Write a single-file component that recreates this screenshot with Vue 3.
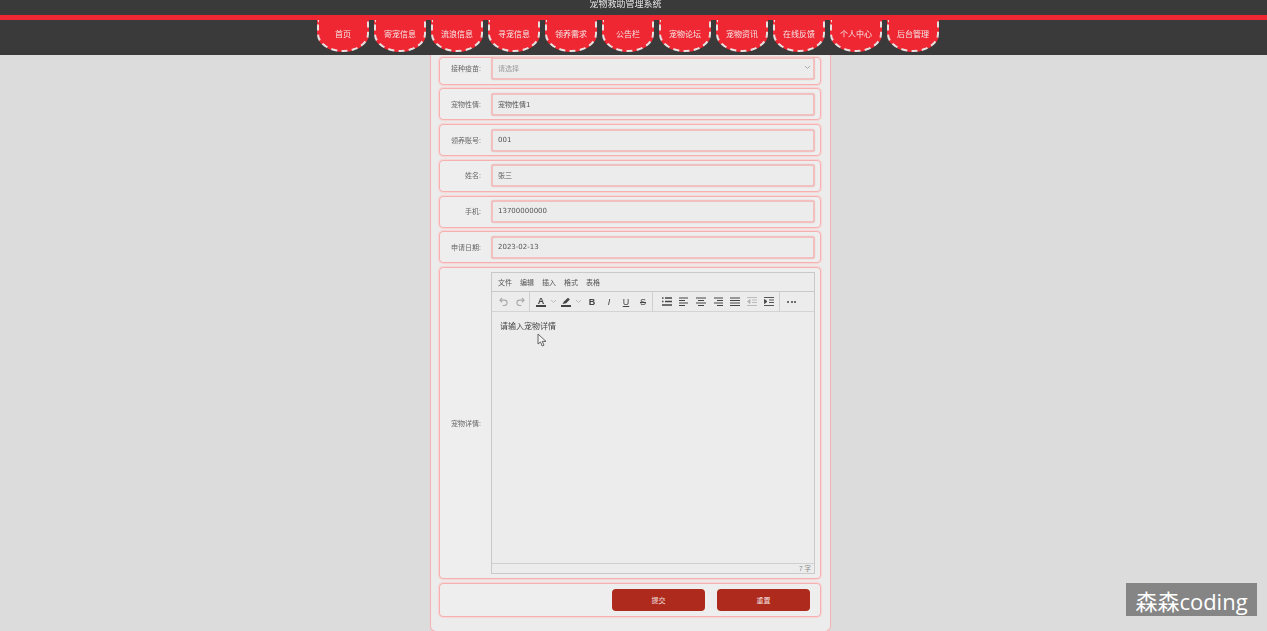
<script setup>
const navs = ['首页','寄宠信息','流浪信息','寻宠信息','领养需求','公告栏','宠物论坛','宠物资讯','在线反馈','个人中心','后台管理']
const fields = [
  { label: '接种疫苗:', value: '请选择', select: true },
  { label: '宠物性情:', value: '宠物性情1' },
  { label: '领养账号:', value: '001' },
  { label: '姓名:', value: '张三' },
  { label: '手机:', value: '13700000000' },
  { label: '申请日期:', value: '2023-02-13' },
]
const menus = ['文件','编辑','插入','格式','表格']
</script>

<template>
  <div class="page">
    <header class="top">
      <div class="title">宠物救助管理系统</div>
      <div class="band"></div>
      <nav class="nav">
        <a v-for="n in navs" :key="n" class="tab">{{ n }}</a>
      </nav>
    </header>
    <main class="main">
      <section class="card">
        <div v-for="(f, i) in fields" :key="f.label" class="row" :class="{ first: i === 0 }">
          <label class="label">{{ f.label }}</label>
          <div class="input" :class="{ muted: f.select }">
            <span>{{ f.value }}</span>
            <svg v-if="f.select" class="chev" width="7" height="5" viewBox="0 0 7 5"><path d="M1 1l2.500 2.500L6 1" fill="none" stroke="#aaa" stroke-width="1"/></svg>
          </div>
        </div>
        <div class="row editor-row">
          <label class="label">宠物详情:</label>
          <div class="editor">
            <div class="menubar"><span v-for="m in menus" :key="m">{{ m }}</span></div>
            <div class="toolbar">
              <div class="group g1">
                <span class="slot"><svg width="9" height="9" viewBox="0 0 10 10"><path d="M3.500 1L1 3.500 3.500 6M1 3.500h5a3 3 0 0 1 0 6H4" fill="none" stroke="#a8a8a8" stroke-width="1.200"/></svg></span>
                <span class="slot"><svg width="9" height="9" viewBox="0 0 10 10"><path d="M6.500 1L9 3.500 6.500 6M9 3.500H4a3 3 0 0 0 0 6h2" fill="none" stroke="#a8a8a8" stroke-width="1.200"/></svg></span>
              </div>
              <div class="group g2">
                <span class="cbtn">
                  <span class="color"><b class="a">A</b><i></i></span>
                  <svg width="7" height="5" viewBox="0 0 7 5"><path d="M1 1l2.500 2.500L6 1" fill="none" stroke="#bbb"/></svg>
                </span>
                <span class="cbtn second">
                  <span class="color"><svg width="10" height="8" viewBox="0 0 10 8"><path d="M1.500 7L3 4.500 7 .8l1.800 1.700-3.600 3.800z" fill="#444"/></svg><i></i></span>
                  <svg width="7" height="5" viewBox="0 0 7 5"><path d="M1 1l2.500 2.500L6 1" fill="none" stroke="#bbb"/></svg>
                </span>
                <b class="slot fmt bold">B</b>
                <em class="slot fmt ital">I</em>
                <span class="slot fmt und">U</span>
                <span class="slot fmt str">S</span>
              </div>
              <div class="group g3">
                <span class="slot"><svg width="10" height="9" viewBox="0 0 10 9"><path d="M3 1h7M3 4.500h7M0 8h10M0 1h1.500M0 4.500h1.500" stroke="#444" stroke-width="1.300"/></svg></span>
                <span class="slot"><svg width="10" height="9" viewBox="0 0 10 9"><path d="M0 1h9M0 3.500h6M0 6h9M0 8.500h6" stroke="#444"/></svg></span>
                <span class="slot"><svg width="10" height="9" viewBox="0 0 10 9"><path d="M0 1h10M2 3.500h6M0 6h10M2 8.500h6" stroke="#444"/></svg></span>
                <span class="slot"><svg width="10" height="9" viewBox="0 0 10 9"><path d="M1 1h9M4 3.500h6M1 6h9M4 8.500h6" stroke="#444"/></svg></span>
                <span class="slot"><svg width="10" height="9" viewBox="0 0 10 9"><path d="M0 1h10M0 3.500h10M0 6h10M0 8.500h10" stroke="#444"/></svg></span>
                <span class="slot"><svg width="10" height="9" viewBox="0 0 10 9"><path d="M0 .5h10M5 3h5M5 5.500h5M0 8.500h10M3 2.500L.5 4.500 3 6.500z" stroke="#b5b5b5" fill="#b5b5b5" stroke-width=".9"/></svg></span>
                <span class="slot"><svg width="10" height="9" viewBox="0 0 10 9"><path d="M0 .5h10M5 3h5M5 5.500h5M0 8.500h10M.5 2.500L3 4.500.5 6.500z" stroke="#444" fill="#444" stroke-width=".9"/></svg></span>
              </div>
              <div class="group g4"><i></i><i></i><i></i></div>
            </div>
            <div class="body">
              <span>请输入宠物详情</span>
              <svg class="cursor" width="10" height="14" viewBox="0 0 10 14"><path d="M1 1v10l2.500-2 1.700 4 1.800-.8-1.700-3.800H9z" fill="#f2f2f2" stroke="#555" stroke-width=".9"/></svg>
            </div>
            <div class="status">7 字</div>
          </div>
        </div>
        <div class="row actions">
          <button class="btn" type="button">提交</button>
          <button class="btn" type="button">重置</button>
        </div>
      </section>
    </main>
    <div class="mark">森森coding</div>
  </div>
</template>

<style>
html, body { margin: 0; padding: 0; height: 100%; overflow: hidden; background: #dbdbdb; }
</style>

<style scoped>
.page {
  position: relative;
  width: 1267px;
  height: 631px;
  overflow: hidden;
  display: flex;
  flex-direction: column;
  background: #dcdcdc;
  font-family: "Liberation Sans", "Noto Sans CJK SC", sans-serif;
  color: #555;
}
.top { background: #3a3a3a; flex: none; height: 55px; }
.title {
  height: 15px;
  line-height: 8px;
  text-align: center;
  font-size: 9px;
  color: #e8e8e8;
  padding-right: 16px;
  filter: blur(.3px);
}
.band { height: 5px; background: #ee2733; }
.nav { display: flex; justify-content: center; gap: 5px; padding-right: 11px; }
.tab {
  width: 48px;
  height: 30px;
  background: #ee2733;
  border: 2px dashed #eadfdf;
  border-top: 0;
  border-radius: 0 0 26px 26px / 0 0 18px 18px;
  color: #f5e8e8;
  font-size: 8px;
  line-height: 29px;
  text-align: center;
  filter: blur(.35px);
}
.main { flex: 1; min-height: 0; display: flex; justify-content: center; align-items: flex-start; overflow: hidden; padding-right: 6px; }
.card {
  width: 382px;
  height: 574px;
  box-sizing: content-box;
  background: #ececec;
  border: 1px solid #f3b3b3;
  border-top: 0;
  border-radius: 0 0 6px 6px;
  padding: 1.500px 9px 0 8px;
  display: flex;
  flex-direction: column;
  gap: 3.800px;
  box-shadow: 0 0 1px #f7c4c4;
}
.row {
  display: flex;
  align-items: center;
  height: 32px;
  flex: none;
  box-sizing: border-box;
  border: 1px solid #f6b0b0;
  border-radius: 4px;
  box-shadow: 0 0 1px 1px #f8d4d4;
  background: #eeeeee;
  padding-right: 5px;
}
.first { height: 28px; padding-bottom: 5px; }
.label {
  width: 41px;
  flex: none;
  text-align: right;
  font-size: 7px;
  color: #666;
  margin-right: 10px;
  padding-bottom: 1px;
  filter: blur(.25px);
}
.input {
  flex: 1;
  height: 23px;
  box-sizing: border-box;
  border: 2px solid #f3c0c0;
  border-radius: 3px;
  background: #ececec;
  display: flex;
  align-items: center;
  justify-content: space-between;
  padding: 0 2px 1px 5px;
  font-family: "DejaVu Sans", "Noto Sans CJK SC", sans-serif;
  font-size: 7px;
  color: #555;
  box-shadow: 0 0 1px #d8b0b0;
}
.input span { filter: blur(.25px); }
.muted { color: #999; }
.editor-row { height: 312px; }
.editor {
  flex: 1;
  height: 302px;
  box-sizing: border-box;
  border: 1px solid #c9c9c9;
  display: flex;
  flex-direction: column;
  background: #ececec;
}
.menubar {
  height: 19px;
  flex: none;
  display: flex;
  align-items: center;
  gap: 8px;
  padding: 0 0 1px 6px;
  font-size: 7px;
  color: #555;
  border-bottom: 1px solid #c9c9c9;
  box-sizing: border-box;
}
.menubar span { filter: blur(.25px); }
.toolbar {
  height: 20px;
  flex: none;
  display: flex;
  border-bottom: 1px solid #d4d4d4;
  box-sizing: border-box;
}
.group {
  display: flex;
  align-items: center;
  height: 100%;
  flex: none;
  border-right: 1px solid #cfcfcf;
  box-sizing: border-box;
}
.slot {
  width: 17px;
  flex: none;
  display: flex;
  align-items: center;
  justify-content: center;
}
.g1 { width: 38px; padding-left: 2.500px; }
.g2 { width: 123px; padding-left: 6px; }
.g3 { width: 127px; padding-left: 5px; }
.g4 { border-right: 0; padding-left: 7px; gap: 1.500px; }
.g4 i { width: 2px; height: 2px; border-radius: 50%; background: #444; }
.cbtn { width: 24px; flex: none; display: flex; align-items: center; gap: 4px; }
.second { margin-left: 1px; margin-right: -1.500px; }
.color { display: flex; flex-direction: column; align-items: center; width: 10px; flex: none; line-height: 8px; }
.color i { display: block; width: 10px; height: 1.500px; background: #444; }
.a { font-size: 9px; line-height: 8px; color: #444; font-weight: 700; filter: blur(.2px); }
.fmt { font-size: 9px; line-height: 10px; color: #444; font-weight: 400; filter: blur(.2px); }
.bold { font-weight: 700; }
.und { text-decoration: underline; }
.str { text-decoration: line-through; }
.body {
  flex: 1;
  position: relative;
  padding: 9px 8px 0;
  font-size: 8px;
  line-height: 12px;
  color: #444;
  border-bottom: 1px solid #d0d0d0;
}
.body span { filter: blur(.2px); }
.cursor { position: absolute; left: 45px; top: 21px; }
.status {
  height: 9px;
  flex: none;
  font-size: 6.500px;
  line-height: 9px;
  text-align: right;
  padding-right: 3px;
  color: #888;
}
.actions {
  height: 34px;
  justify-content: flex-end;
  gap: 12px;
  padding-right: 10px;
}
.btn {
  width: 93px;
  height: 22px;
  border: 0;
  border-radius: 4px;
  background: #ae2a1c;
  color: #f2e2e0;
  font-size: 7px;
  font-family: inherit;
  padding: 0;
}
.mark {
  position: absolute;
  left: 1126px;
  top: 583px;
  width: 131px;
  height: 33px;
  box-sizing: border-box;
  padding-top: 4px;
  background: #858585;
  color: #fff;
  font-size: 22px;
  text-align: center;
  white-space: nowrap;
  font-family: "Open Sans", "Noto Sans CJK SC", sans-serif;
  line-height: 29px;
}
</style>
